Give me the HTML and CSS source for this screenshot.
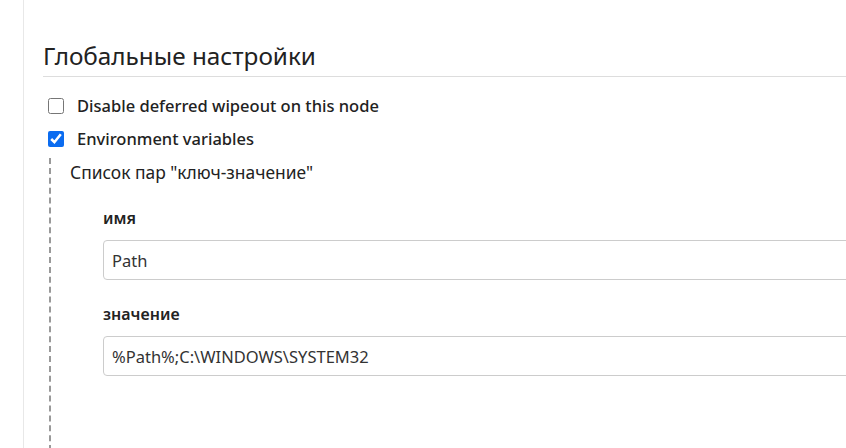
FILE: index.html
```html
<!DOCTYPE html>
<html lang="ru">

<head>
  <meta charset="utf-8">
  <title>Глобальные настройки</title>
  <link rel="stylesheet" href="styles.css">
</head>

<body>
  <div class="page">
    <div class="main">
      <h2 class="section-title">Глобальные настройки</h2>
      <div class="option">
        <input type="checkbox" id="wipeout">
        <label for="wipeout">Disable deferred wipeout on this node</label>
      </div>
      <div class="option">
        <input type="checkbox" id="envvars" checked>
        <label for="envvars">Environment variables</label>
      </div>
      <div class="nested">
        <div class="nested-title">Список пар "ключ-значение"</div>
        <div class="pair">
          <div class="field">
            <div class="field-label">имя</div>
            <input class="text-input" type="text" value="Path">
          </div>
          <div class="field">
            <div class="field-label">значение</div>
            <input class="text-input" type="text" value="%Path%;C:\WINDOWS\SYSTEM32">
          </div>
        </div>
      </div>
    </div>
  </div>
</body>

</html>
```

FILE: styles.css
```css
html {
  height: 100%;
  font-family: 'Noto Sans', 'Open Sans', sans-serif;
  color: #333;
}

body {
  height: inherit;
  margin: 0;
  overflow: hidden;
  background: #fff;
}

.page {
  height: 100%;
  padding-left: 23px;
  overflow: hidden;
}

.main {
  box-sizing: border-box;
  height: 100%;
  width: 1000px;
  border-left: 1px solid #e8e8e8;
  padding: 41px 0 0 19px;
  overflow: hidden;
}

.section-title {
  margin: 0 0 12px;
  padding-bottom: 5px;
  border-bottom: 1px solid #ddd;
  font-size: 24.3px;
  font-weight: 400;
  line-height: 30px;
  color: #222;
}

.option {
  display: flex;
  align-items: center;
  height: 33px;
}

.option input {
  width: 16px;
  height: 16px;
  margin: 0 13px 0 5px;
  accent-color: #0b6cf0;
}

.option label {
  font-size: 16.5px;
  font-weight: 500;
  color: #222;
}

.nested {
  margin: 3px 0 0 6px;
  height: 400px;
  border-left: 2px dashed #999;
  padding: 2px 0 0 19px;
}

.nested-title {
  font-size: 17.4px;
  line-height: 24px;
  color: #222;
}

.pair {
  padding: 23px 0 0 33px;
}

.field {
  margin-bottom: 23px;
}

.field-label {
  font-size: 16px;
  font-weight: 600;
  line-height: 22px;
  margin-bottom: 11px;
  color: #222;
}

.text-input {
  box-sizing: border-box;
  width: 900px;
  height: 40px;
  padding: 0 8px;
  border: 1px solid #ccc;
  border-radius: 4px;
  font-family: inherit;
  font-size: 16.5px;
  color: #333;
}
```
